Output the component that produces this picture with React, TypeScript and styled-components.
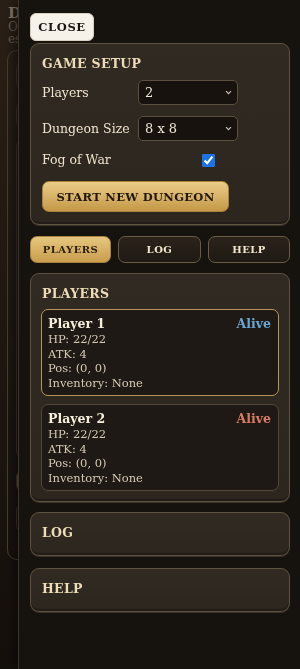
import React from "react";
import styled, { createGlobalStyle } from "styled-components";

const Global = createGlobalStyle`
  html, body { margin: 0; padding: 0; height: 100%; }
  body {
    background: linear-gradient(180deg, #2a2017 0%, #1d1610 60%, #15100c 100%);
    font-family: "DejaVu Serif", "Liberation Serif", serif;
    overflow: hidden;
  }
`;

const Page = styled.main`
  width: 18px;
  height: 669px;
  overflow: hidden;
  padding: 5px 0 0 8px;
  box-sizing: border-box;
  color: #6f6250;
`;

const PageInner = styled.div`
  width: 260px;
`;

const PageTitle = styled.h1`
  margin: 0;
  font-size: 15px;
  font-weight: 700;
  color: #8a7c66;
  line-height: 16px;
`;

const PageSub = styled.p`
  margin: 0;
  font-size: 12px;
  line-height: 12px;
  color: #6a5d4c;
`;

const PageCard = styled.section`
  margin: 5px 0 0 -1px;
  height: 510px;
  border: 1px solid #4a3f30;
  border-radius: 10px;
  display: flex;
  flex-direction: column;
  gap: 10px;
  padding: 10px 8px;
  box-sizing: border-box;
`;

const PageBlock = styled.div<{ $h: number; $gold?: boolean }>`
  height: ${(p) => p.$h}px;
  border: 1px solid #3e3428;
  border-radius: 8px;
  background: ${(p) => (p.$gold ? "#6c5a38" : "transparent")};
`;

const Drawer = styled.aside`
  position: fixed;
  top: 0;
  bottom: 0;
  left: 18px;
  right: 0;
  background: #16120e;
  border-left: 1px solid #3d352b;
  box-shadow: -4px 0 10px rgba(0, 0, 0, 0.5);
  padding: 13px 10px 0 11px;
  box-sizing: border-box;
  display: flex;
  flex-direction: column;
  align-items: stretch;
`;

const CloseButton = styled.button`
  align-self: flex-start;
  height: 28px;
  width: 64px;
  padding: 0;
  background: #f6f2ea;
  border: 1px solid #d8cfbf;
  border-radius: 6px;
  font-family: "DejaVu Serif", serif;
  font-weight: 700;
  font-size: 11.5px;
  letter-spacing: 0.6px;
  color: #1b1510;
`;

const Panel = styled.section<{ $mt: number; $pb?: number }>`
  margin-top: ${(p) => p.$mt}px;
  background: linear-gradient(180deg, #312a22 0%, #2c261f 100%);
  border: 1px solid #5e5240;
  border-radius: 9px;
  box-shadow: inset 0 -2px 0 rgba(0, 0, 0, 0.25), 0 1px 0 #3b3327;
  padding: 11px 10px ${(p) => p.$pb ?? 12}px 10px;
  display: flex;
  flex-direction: column;
`;

const PanelTitle = styled.h2`
  margin: 0 0 0 1px;
  font-size: 12.5px;
  font-weight: 700;
  letter-spacing: 0.3px;
  line-height: 18px;
  color: #eddcb7;
`;

const FormGrid = styled.div`
  margin: 7px 0 0 1px;
  display: grid;
  grid-template-columns: 96px 100px;
  row-gap: 11px;
  align-items: center;
`;

const Label = styled.span`
  font-size: 12.5px;
  color: #eee3cc;
`;

const SelectWrap = styled.div`
  position: relative;
  height: 25px;
`;

const Select = styled.select`
  appearance: none;
  width: 100%;
  height: 25px;
  background: #17120e;
  border: 1px solid #5c503e;
  border-radius: 5px;
  color: #efe6d6;
  font-family: "DejaVu Serif", serif;
  font-size: 13px;
  padding: 0 6px;
`;

const Chevron = styled.svg`
  position: absolute;
  right: 6px;
  top: 10px;
  width: 7px;
  height: 5px;
  pointer-events: none;
`;

const Check = styled.input`
  margin: 1px 0 0 64px;
  width: 13px;
  height: 13px;
  accent-color: #1a73e8;
`;

const StartButton = styled.button`
  margin: 14px 0 0 1px;
  align-self: flex-start;
  width: 187px;
  height: 31px;
  border: 1px solid #a8823f;
  border-radius: 7px;
  background: linear-gradient(180deg, #ebcd86 0%, #d6b066 55%, #c49845 100%);
  font-family: "DejaVu Serif", serif;
  font-weight: 700;
  font-size: 11.5px;
  letter-spacing: 0.3px;
  white-space: nowrap;
  color: #22180d;
`;

const Tabs = styled.nav`
  margin-top: 11px;
  display: grid;
  grid-template-columns: 81px 83px 82px;
  column-gap: 7px;
`;

const Tab = styled.button<{ $active?: boolean }>`
  height: 27px;
  border-radius: 7px;
  font-family: "DejaVu Serif", serif;
  font-weight: 700;
  font-size: 10px;
  letter-spacing: 0.5px;
  border: 1px solid ${(p) => (p.$active ? "#a8823f" : "#6b5b45")};
  background: ${(p) =>
    p.$active
      ? "linear-gradient(180deg, #e6c77f 0%, #c99d4c 100%)"
      : "linear-gradient(180deg, #2b231b 0%, #1f1914 100%)"};
  color: ${(p) => (p.$active ? "#2a1e10" : "#f1e6cd")};
`;

const Cards = styled.div`
  margin-top: 6px;
  display: flex;
  flex-direction: column;
  gap: 8px;
`;

const Card = styled.article<{ $active?: boolean }>`
  background: #1e1914;
  border: 1px solid ${(p) => (p.$active ? "#b69758" : "#54483a")};
  border-radius: 7px;
  padding: 6px 7px 5px 6px;
  display: flex;
  flex-direction: column;
`;

const CardHead = styled.div`
  display: flex;
  justify-content: space-between;
  align-items: baseline;
`;

const Name = styled.span`
  font-size: 12.5px;
  font-weight: 700;
  color: #f6eedc;
  line-height: 16px;
`;

const Status = styled.span<{ $color: string }>`
  font-size: 12.5px;
  font-weight: 700;
  line-height: 16px;
  color: ${(p) => p.$color};
`;

const Stat = styled.span`
  font-size: 11.5px;
  line-height: 14.5px;
  color: #d5c9b4;
`;

const players = [
  { name: "Player 1", color: "#6aa6d2", active: true },
  { name: "Player 2", color: "#d87c60", active: false },
];

function ChevronIcon() {
  return (
    <Chevron viewBox="0 0 7 5">
      <path d="M1 1.2l2.5 2.5 2.5-2.5" fill="none" stroke="#cfc6b6" strokeWidth="1.1" />
    </Chevron>
  );
}

export default function App() {
  return (
    <>
      <Global />
      <Page>
        <PageInner>
          <PageTitle>Dungeon</PageTitle>
          <PageSub>Old stones</PageSub>
          <PageSub>escape</PageSub>
          <PageCard>
            <PageBlock $h={28} />
            <PageBlock $h={26} />
            <PageBlock $h={318} />
            <PageBlock $h={22} $gold />
            <PageBlock $h={28} />
          </PageCard>
        </PageInner>
      </Page>
      <Drawer>
        <CloseButton>CLOSE</CloseButton>
        <Panel $mt={2}>
          <PanelTitle>GAME SETUP</PanelTitle>
          <FormGrid>
            <Label>Players</Label>
            <SelectWrap>
              <Select defaultValue="2">
                <option value="1">1</option>
                <option value="2">2</option>
                <option value="3">3</option>
                <option value="4">4</option>
              </Select>
              <ChevronIcon />
            </SelectWrap>
            <Label>Dungeon Size</Label>
            <SelectWrap>
              <Select defaultValue="8">
                <option value="6">6 x 6</option>
                <option value="8">8 x 8</option>
                <option value="10">10 x 10</option>
              </Select>
              <ChevronIcon />
            </SelectWrap>
            <Label>Fog of War</Label>
            <Check type="checkbox" defaultChecked />
          </FormGrid>
          <StartButton>START NEW DUNGEON</StartButton>
        </Panel>
        <Tabs>
          <Tab $active>PLAYERS</Tab>
          <Tab>LOG</Tab>
          <Tab>HELP</Tab>
        </Tabs>
        <Panel $mt={10} $pb={10}>
          <PanelTitle>PLAYERS</PanelTitle>
          <Cards>
            {players.map((p) => (
              <Card key={p.name} $active={p.active}>
                <CardHead>
                  <Name>{p.name}</Name>
                  <Status $color={p.color}>Alive</Status>
                </CardHead>
                <Stat>HP: 22/22</Stat>
                <Stat>ATK: 4</Stat>
                <Stat>Pos: (0, 0)</Stat>
                <Stat>Inventory: None</Stat>
              </Card>
            ))}
          </Cards>
        </Panel>
        <Panel $mt={10} $pb={13}>
          <PanelTitle>LOG</PanelTitle>
        </Panel>
        <Panel $mt={12} $pb={13}>
          <PanelTitle>HELP</PanelTitle>
        </Panel>
      </Drawer>
    </>
  );
}
